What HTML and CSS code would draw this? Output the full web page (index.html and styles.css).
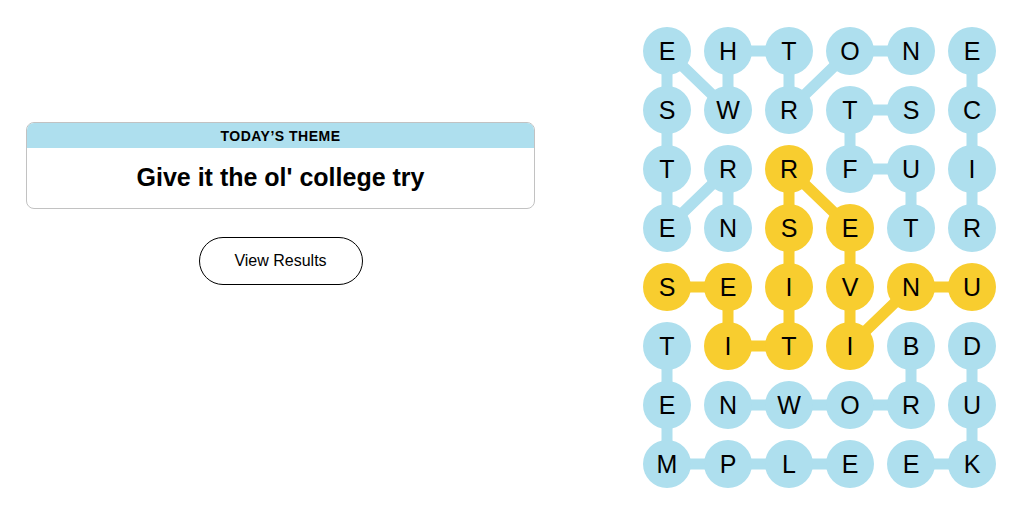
FILE: index.html
```html
<!DOCTYPE html>
<html lang="en">
<head>
  <meta charset="UTF-8">
  <title>Strands</title>
  <link rel="stylesheet" href="styles.css">
</head>
<body>

  <div class="page">

    <!-- Theme card and results button -->
    <section class="info">
      <div class="theme-card">
        <div class="theme-label">TODAY’S THEME</div>
        <div class="theme-text">Give it the ol' college try</div>
      </div>
      <button class="results-btn">View Results</button>
    </section>

    <!-- Letter board -->
    <section class="board">
      <svg class="links" width="353" height="461" viewBox="0 0 353 461">
        <g class="found">
          <polyline points="268,24 207,24 146,83 146,24 85,24 85,83 24,24 24,201 85,142 85,201" />
          <polyline points="268,201 268,142 207,142 207,83 268,83" />
          <polyline points="329,201 329,24" />
          <polyline points="24,319 24,437 207,437" />
          <polyline points="268,319 268,378 85,378" />
          <polyline points="329,319 329,437 268,437" />
        </g>
        <g class="spangram">
          <polyline points="24,260 85,260 85,319 146,319 146,142 207,201 207,319 268,260 329,260" />
        </g>
      </svg>

      <div class="grid">
        <div class="cell">E</div><div class="cell">H</div><div class="cell">T</div><div class="cell">O</div><div class="cell">N</div><div class="cell">E</div>
        <div class="cell">S</div><div class="cell">W</div><div class="cell">R</div><div class="cell">T</div><div class="cell">S</div><div class="cell">C</div>
        <div class="cell">T</div><div class="cell">R</div><div class="cell gold">R</div><div class="cell">F</div><div class="cell">U</div><div class="cell">I</div>
        <div class="cell">E</div><div class="cell">N</div><div class="cell gold">S</div><div class="cell gold">E</div><div class="cell">T</div><div class="cell">R</div>
        <div class="cell gold">S</div><div class="cell gold">E</div><div class="cell gold">I</div><div class="cell gold">V</div><div class="cell gold">N</div><div class="cell gold">U</div>
        <div class="cell">T</div><div class="cell gold">I</div><div class="cell gold">T</div><div class="cell gold">I</div><div class="cell">B</div><div class="cell">D</div>
        <div class="cell">E</div><div class="cell">N</div><div class="cell">W</div><div class="cell">O</div><div class="cell">R</div><div class="cell">U</div>
        <div class="cell">M</div><div class="cell">P</div><div class="cell">L</div><div class="cell">E</div><div class="cell">E</div><div class="cell">K</div>
      </div>
    </section>

  </div>

</body>
</html>
```

FILE: styles.css
```css
body {
  margin: 0;
  font-family: "Liberation Sans", Arial, sans-serif;
  color: #000;
  background: #fff;
}

.page {
  display: flex;
  align-items: flex-start;
}

.info {
  width: 509px;
  margin-left: 26px;
  padding-top: 122px;
  display: flex;
  flex-direction: column;
  align-items: center;
}

.theme-card {
  width: 100%;
  box-sizing: border-box;
  border: 1px solid #c2c2c2;
  border-radius: 8px;
  overflow: hidden;
}

.theme-label {
  background: #aedfee;
  height: 25px;
  line-height: 26px;
  text-align: center;
  font-size: 14px;
  font-weight: bold;
  letter-spacing: 0.5px;
}

.theme-text {
  height: 60px;
  line-height: 58px;
  text-align: center;
  font-size: 25px;
  font-weight: bold;
}

.results-btn {
  margin-top: 28px;
  width: 164px;
  height: 48px;
  border: 1px solid #000;
  border-radius: 24px;
  background: #fff;
  font-family: inherit;
  font-size: 16px;
  color: #000;
  cursor: pointer;
}

.board {
  position: relative;
  margin-left: 108px;
  margin-top: 27px;
}

.links {
  position: absolute;
  left: 0;
  top: 0;
}

.links polyline {
  fill: none;
  stroke-width: 11;
  stroke-linejoin: round;
}

.found polyline {
  stroke: #aedfee;
}

.spangram polyline {
  stroke: #f8cd2f;
}

.grid {
  position: relative;
  display: grid;
  grid-template-columns: repeat(6, 48px);
  grid-auto-rows: 48px;
  column-gap: 13px;
  row-gap: 11px;
}

.cell {
  width: 48px;
  height: 48px;
  border-radius: 50%;
  background: #aedfee;
  display: flex;
  align-items: center;
  justify-content: center;
  font-size: 25px;
}

.cell.gold {
  background: #f8cd2f;
}
```
